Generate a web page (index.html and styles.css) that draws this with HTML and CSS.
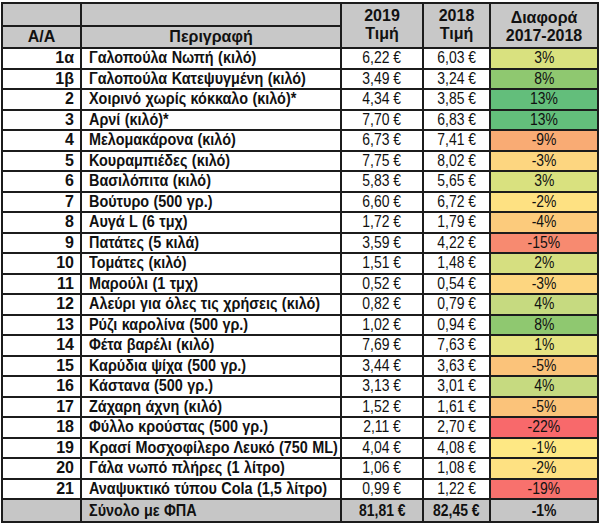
FILE: index.html
```html
<!DOCTYPE html>
<html lang="el">
<head>
<meta charset="utf-8">
<title>Τιμές</title>
<link rel="stylesheet" href="styles.css">
</head>
<body>
<table class="prices">
  <colgroup>
    <col class="c-aa"><col class="c-desc"><col class="c-y19"><col class="c-y18"><col class="c-diff">
  </colgroup>
  <thead>
    <tr class="h1">
      <th class="hd"></th>
      <th class="hd"></th>
      <th class="hd yr" rowspan="2">2019<br>Τιμή</th>
      <th class="hd yr" rowspan="2">2018<br>Τιμή</th>
      <th class="hd diffh" rowspan="2">Διαφορά<br>2017-2018</th>
    </tr>
    <tr class="h2">
      <th class="hd">A/A</th>
      <th class="hd">Περιγραφή</th>
    </tr>
  </thead>
  <tbody>
    <tr><td class="aa">1α</td><td class="desc"><span>Γαλοπούλα Νωπή (κιλό)</span></td><td class="val"><span>6,22 €</span></td><td class="val"><span>6,03 €</span></td><td class="pct p3"><span>3%</span></td></tr>
    <tr><td class="aa">1β</td><td class="desc"><span>Γαλοπούλα Κατεψυγμένη (κιλό)</span></td><td class="val"><span>3,49 €</span></td><td class="val"><span>3,24 €</span></td><td class="pct p8"><span>8%</span></td></tr>
    <tr><td class="aa">2</td><td class="desc"><span>Χοιρινό χωρίς κόκκαλο (κιλό)*</span></td><td class="val"><span>4,34 €</span></td><td class="val"><span>3,85 €</span></td><td class="pct p13"><span>13%</span></td></tr>
    <tr><td class="aa">3</td><td class="desc"><span>Αρνί (κιλό)*</span></td><td class="val"><span>7,70 €</span></td><td class="val"><span>6,83 €</span></td><td class="pct p13"><span>13%</span></td></tr>
    <tr><td class="aa">4</td><td class="desc"><span>Μελομακάρονα (κιλό)</span></td><td class="val"><span>6,73 €</span></td><td class="val"><span>7,41 €</span></td><td class="pct m9"><span>-9%</span></td></tr>
    <tr><td class="aa">5</td><td class="desc"><span>Κουραμπιέδες (κιλό)</span></td><td class="val"><span>7,75 €</span></td><td class="val"><span>8,02 €</span></td><td class="pct m3"><span>-3%</span></td></tr>
    <tr><td class="aa">6</td><td class="desc"><span>Βασιλόπιτα (κιλό)</span></td><td class="val"><span>5,83 €</span></td><td class="val"><span>5,65 €</span></td><td class="pct p3"><span>3%</span></td></tr>
    <tr><td class="aa">7</td><td class="desc"><span>Βούτυρο (500 γρ.)</span></td><td class="val"><span>6,60 €</span></td><td class="val"><span>6,72 €</span></td><td class="pct m2"><span>-2%</span></td></tr>
    <tr><td class="aa">8</td><td class="desc"><span>Αυγά L (6 τμχ)</span></td><td class="val"><span>1,72 €</span></td><td class="val"><span>1,79 €</span></td><td class="pct m4"><span>-4%</span></td></tr>
    <tr><td class="aa">9</td><td class="desc"><span>Πατάτες (5 κιλά)</span></td><td class="val"><span>3,59 €</span></td><td class="val"><span>4,22 €</span></td><td class="pct m15"><span>-15%</span></td></tr>
    <tr><td class="aa">10</td><td class="desc"><span>Τομάτες (κιλό)</span></td><td class="val"><span>1,51 €</span></td><td class="val"><span>1,48 €</span></td><td class="pct p2"><span>2%</span></td></tr>
    <tr><td class="aa">11</td><td class="desc"><span>Μαρούλι (1 τμχ)</span></td><td class="val"><span>0,52 €</span></td><td class="val"><span>0,54 €</span></td><td class="pct m3"><span>-3%</span></td></tr>
    <tr><td class="aa">12</td><td class="desc"><span>Αλεύρι για όλες τις χρήσεις (κιλό)</span></td><td class="val"><span>0,82 €</span></td><td class="val"><span>0,79 €</span></td><td class="pct p4"><span>4%</span></td></tr>
    <tr><td class="aa">13</td><td class="desc"><span>Ρύζι καρολίνα (500 γρ.)</span></td><td class="val"><span>1,02 €</span></td><td class="val"><span>0,94 €</span></td><td class="pct p8"><span>8%</span></td></tr>
    <tr><td class="aa">14</td><td class="desc"><span>Φέτα βαρέλι (κιλό)</span></td><td class="val"><span>7,69 €</span></td><td class="val"><span>7,63 €</span></td><td class="pct p1"><span>1%</span></td></tr>
    <tr><td class="aa">15</td><td class="desc"><span>Καρύδια ψίχα (500 γρ.)</span></td><td class="val"><span>3,44 €</span></td><td class="val"><span>3,63 €</span></td><td class="pct m5"><span>-5%</span></td></tr>
    <tr><td class="aa">16</td><td class="desc"><span>Κάστανα (500 γρ.)</span></td><td class="val"><span>3,13 €</span></td><td class="val"><span>3,01 €</span></td><td class="pct p4"><span>4%</span></td></tr>
    <tr><td class="aa">17</td><td class="desc"><span>Ζάχαρη άχνη (κιλό)</span></td><td class="val"><span>1,52 €</span></td><td class="val"><span>1,61 €</span></td><td class="pct m5"><span>-5%</span></td></tr>
    <tr><td class="aa">18</td><td class="desc"><span>Φύλλο κρούστας (500 γρ.)</span></td><td class="val"><span>2,11 €</span></td><td class="val"><span>2,70 €</span></td><td class="pct m22"><span>-22%</span></td></tr>
    <tr><td class="aa">19</td><td class="desc"><span>Κρασί Μοσχοφίλερο Λευκό (750 ML)</span></td><td class="val"><span>4,04 €</span></td><td class="val"><span>4,08 €</span></td><td class="pct m1"><span>-1%</span></td></tr>
    <tr><td class="aa">20</td><td class="desc"><span>Γάλα νωπό πλήρες (1 λίτρο)</span></td><td class="val"><span>1,06 €</span></td><td class="val"><span>1,08 €</span></td><td class="pct m2"><span>-2%</span></td></tr>
    <tr><td class="aa">21</td><td class="desc"><span>Αναψυκτικό τύπου Cola (1,5 λίτρο)</span></td><td class="val"><span>0,99 €</span></td><td class="val"><span>1,22 €</span></td><td class="pct m19"><span>-19%</span></td></tr>
  </tbody>
  <tfoot>
    <tr class="total"><td class="aa"></td><td class="desc"><span>Σύνολο με ΦΠΑ</span></td><td class="val tb"><span>81,81 €</span></td><td class="val tb"><span>82,45 €</span></td><td class="pct tb"><span>-1%</span></td></tr>
  </tfoot>
</table>
</body>
</html>
```
FILE: styles.css
```css
html, body { margin: 0; padding: 0; background: #fff; }
body { padding: 2px 0 0 1px; }

.prices {
  border-collapse: collapse;
  table-layout: fixed;
  width: 596px;
  font-family: "Liberation Sans", Arial, sans-serif;
  color: #111;
}
.c-aa { width: 79px; }
.c-desc { width: 260px; }
.c-y19 { width: 82px; }
.c-y18 { width: 67px; }
.c-diff { width: 108px; }

.prices th, .prices td {
  border: 2px solid #1c1c1c;
  padding: 0;
  overflow: hidden;
  white-space: nowrap;
  line-height: 16px;
}

.hd {
  background: #c8c8c8;
  font-weight: bold;
  font-size: 16px;
  text-align: center;
}
.prices .yr, .prices .diffh { line-height: 18px; }
.h1 { height: 23px; }
.h2 { height: 22px; }
.yr { vertical-align: middle; padding-bottom: 2px !important; }
.diffh { vertical-align: middle; padding-top: 3px !important; }

tbody tr { height: 20.5px; }
.total { height: 23px; background: #c6c6c6; }

.aa {
  text-align: right;
  padding-right: 6px !important;
  font-weight: bold;
  font-size: 16px;
}
.desc {
  text-align: left;
  padding-left: 7px !important;
  font-weight: bold;
  font-size: 16px;
  word-spacing: 0.5px;
}
.desc span {
  display: inline-block;
  transform: scaleX(0.9);
  transform-origin: left center;
}
.val, .pct {
  text-align: center;
  font-size: 17px;
}
.val span, .pct span {
  display: inline-block;
  transform: scaleX(0.82);
  transform-origin: center;
}
.tb { font-weight: bold; }

.p1 { background: #e6e483; }
.p2 { background: #d6df80; }
.p3 { background: #d9e17f; }
.p4 { background: #c6da80; }
.p8 { background: #8fc870; }
.p13 { background: #63be7b; }
.m1 { background: #fee884; }
.m2 { background: #fee182; }
.m3 { background: #fdd680; }
.m4 { background: #fccb7c; }
.m5 { background: #fbc37a; }
.m9 { background: #f9ab74; }
.m15 { background: #f78a70; }
.m19 { background: #f8716d; }
.m22 { background: #f8696b; }
```
